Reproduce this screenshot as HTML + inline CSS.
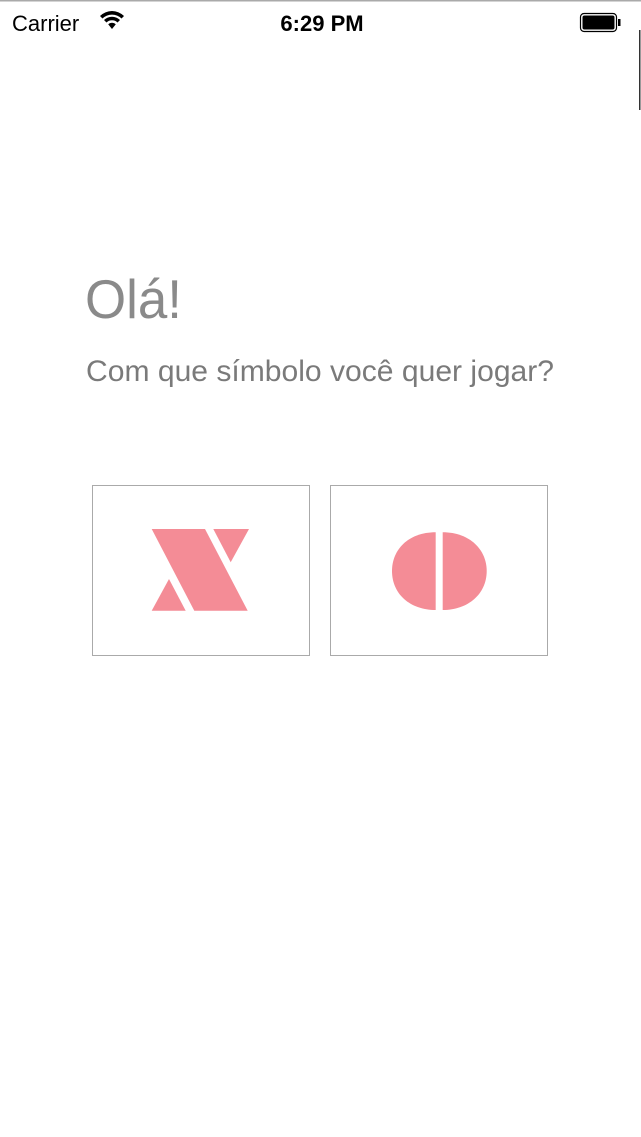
<!DOCTYPE html>
<html><head><meta charset="utf-8"><style>
html,body{margin:0;padding:0;background:#fff;width:641px;height:1137px;overflow:hidden}
</style></head><body>
<svg width="641" height="1137" viewBox="0 0 641 1137" xmlns="http://www.w3.org/2000/svg" style="display:block">
<rect x="0" y="0" width="641" height="1.5" fill="#aaa"/>
<text x="12" y="31" font-family="Liberation Sans, sans-serif" font-size="22" fill="#000">Carrier</text>
<g transform="translate(112,22)" fill="#000">
<path d="M-12,-6 A17,17 0 0 1 12,-6 L9.5,-3.5 A13.5,13.5 0 0 0 -9.5,-3.5Z"/>
<path d="M-8,-2 A11.5,11.5 0 0 1 8,-2 L5.5,0.5 A8,8 0 0 0 -5.5,0.5Z"/>
<path d="M-3.8,2.3 A5.5,5.5 0 0 1 3.8,2.3 L0,7Z"/>
</g>
<text x="322" y="31" text-anchor="middle" font-family="Liberation Sans, sans-serif" font-size="22" font-weight="bold" fill="#000">6:29 PM</text>
<rect x="580.5" y="13.5" width="36" height="18" rx="3.5" fill="none" stroke="#000" stroke-width="1.2"/>
<rect x="582.5" y="15.5" width="32" height="14" rx="2" fill="#000"/>
<rect x="618" y="19" width="2.5" height="7" fill="#000"/>
<rect x="639" y="30" width="1.5" height="80" fill="#333"/>
<text x="85" y="318" font-family="Liberation Sans, sans-serif" font-size="55" fill="#8a8a8a" textLength="97" lengthAdjust="spacingAndGlyphs">Olá!</text>
<text x="86" y="381" font-family="Liberation Sans, sans-serif" font-size="30" fill="#7a7a7a" textLength="468" lengthAdjust="spacingAndGlyphs">Com que símbolo você quer jogar?</text>
<rect x="92.5" y="485.5" width="217" height="170" fill="none" stroke="#aaa" stroke-width="1"/>
<rect x="330.5" y="485.5" width="217" height="170" fill="none" stroke="#aaa" stroke-width="1"/>
<g fill="#f48c96">
<path d="M151.7,529 L205,529 L247.7,610.7 L194.3,610.7Z"/>
<path d="M213.3,529 L249,529 L230.7,562.3Z"/>
<path d="M169,579 L185.7,610.7 L151.7,610.7Z"/>
<path d="M435.7,532.3 C408,532.3 392,550 392,571 C392,594 410,610 435.7,610Z"/>
<path d="M442.7,532.3 C470,532.3 486.7,550 486.7,571 C486.7,594 468,610 442.7,610Z"/>
</g>
</svg>
</body></html>
